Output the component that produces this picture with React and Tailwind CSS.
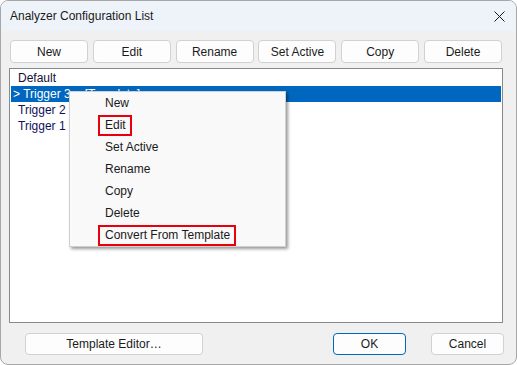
import React from 'react';

const font = { fontFamily: '"Liberation Sans", Arial, sans-serif' };

const topButtons = ['New', 'Edit', 'Rename', 'Set Active', 'Copy', 'Delete'];

const menuItems = [
  { label: 'New' },
  { label: 'Edit', boxed: true },
  { label: 'Set Active' },
  { label: 'Rename' },
  { label: 'Copy' },
  { label: 'Delete' },
  { label: 'Convert From Template', boxed: true },
];

const Btn = ({ children, className = '' }) => (
  <button
    className={`rounded-[4px] border border-[#d1d1d1] bg-[#fdfdfd] text-[12px] text-[#1b1b1b] leading-none ${className}`}
  >
    {children}
  </button>
);

const App = () => {
  return (
    <div
      style={font}
      className="relative w-[517px] h-[365px] flex flex-col overflow-hidden rounded-[8px] border border-[#a7a7a7] bg-[#f0f0f0] text-[12px]"
    >
      {/* Title bar */}
      <div className="h-[30px] shrink-0 flex items-center justify-between bg-[#eef3f9] pl-[9px] pr-[10px]">
        <span className="text-[12px] text-[#1a1a1a]">Analyzer Configuration List</span>
        <svg width="11" height="11" viewBox="0 0 11 11" className="mr-[1px]">
          <path d="M0.5 0.5 L10.5 10.5 M10.5 0.5 L0.5 10.5" stroke="#1a1a1a" strokeWidth="1" />
        </svg>
      </div>

      {/* Top buttons */}
      <div className="mt-[9px] ml-[9px] mr-[14px] flex justify-between">
        {topButtons.map((b) => (
          <Btn key={b} className="w-[78px] h-[23px]">{b}</Btn>
        ))}
      </div>

      {/* List box */}
      <div className="mt-[5px] ml-[8px] w-[494px] h-[255px] border border-[#868a91] bg-white p-[1px]">
        <div className="h-[16px] flex items-center pl-[7px] text-[#111133]">Default</div>
        <div className="h-[16px] flex items-center pl-[2px] bg-[#0067c0] text-white whitespace-pre">
          <span>{'> Trigger 3'}</span>
          <span className="ml-[14px]">[Template]</span>
        </div>
        <div className="h-[16px] flex items-center pl-[7px] text-[#10105a]">Trigger 2</div>
        <div className="h-[16px] flex items-center pl-[7px] text-[#10105a]">Trigger 1</div>
      </div>

      {/* Bottom buttons */}
      <div className="mt-[10px] flex items-center">
        <Btn className="ml-[24px] w-[178px] h-[22px]">Template Editor…</Btn>
        <Btn className="ml-[130px] w-[73px] h-[22px] !border-[#0067c0]">OK</Btn>
        <Btn className="ml-[25px] w-[73px] h-[22px]">Cancel</Btn>
      </div>

      {/* Context menu */}
      <div className="absolute left-[68px] top-[90px] w-[217px] border border-[#d0d0d0] bg-[#f9f9f9] shadow-[2px_2px_3px_rgba(0,0,0,0.4)]">
        {menuItems.map((m) => (
          <div key={m.label} className="h-[22px] flex items-center pl-[28px] text-[12px] text-[#1a1a1a] whitespace-nowrap">
            {m.boxed ? (
              <span className="h-[21px] flex items-center pl-[5px] pr-[4px] border-2 border-[#e8000d]">
                {m.label}
              </span>
            ) : (
              <span className="pl-[7px]">{m.label}</span>
            )}
          </div>
        ))}
      </div>
    </div>
  );
};

export default App;
